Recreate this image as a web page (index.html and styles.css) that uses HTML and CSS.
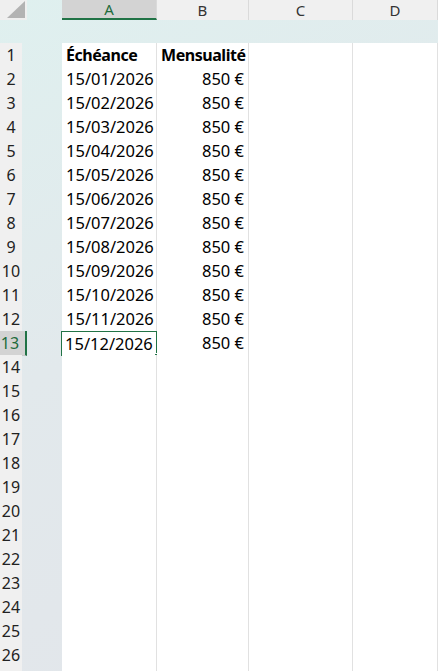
FILE: index.html
```html
<!DOCTYPE html>
<html lang="fr">
<head>
  <meta charset="UTF-8">
  <title>Échéancier</title>
  <link rel="stylesheet" href="styles.css">
</head>
<body>

  <div class="sheet">
    <!-- column headers -->
    <div class="row head">
      <div class="corner">
        <svg width="27" height="20" viewBox="0 0 27 20"><polygon points="7,18 25,18 25,1" fill="#b3b3b3"/></svg>
      </div>
      <div class="gap"></div>
      <div class="ch sel">A</div>
      <div class="ch">B</div>
      <div class="ch">C</div>
      <div class="ch">D</div>
    </div>
    <div class="band"></div>

    <div class="row"><div class="rh">1</div><div class="gap"></div><div class="c bold">Échéance</div><div class="c bold">Mensualité</div><div class="c"></div><div class="c"></div></div>
    <div class="row"><div class="rh">2</div><div class="gap"></div><div class="c">15/01/2026</div><div class="c num">850 €</div><div class="c"></div><div class="c"></div></div>
    <div class="row"><div class="rh">3</div><div class="gap"></div><div class="c">15/02/2026</div><div class="c num">850 €</div><div class="c"></div><div class="c"></div></div>
    <div class="row"><div class="rh">4</div><div class="gap"></div><div class="c">15/03/2026</div><div class="c num">850 €</div><div class="c"></div><div class="c"></div></div>
    <div class="row"><div class="rh">5</div><div class="gap"></div><div class="c">15/04/2026</div><div class="c num">850 €</div><div class="c"></div><div class="c"></div></div>
    <div class="row"><div class="rh">6</div><div class="gap"></div><div class="c">15/05/2026</div><div class="c num">850 €</div><div class="c"></div><div class="c"></div></div>
    <div class="row"><div class="rh">7</div><div class="gap"></div><div class="c">15/06/2026</div><div class="c num">850 €</div><div class="c"></div><div class="c"></div></div>
    <div class="row"><div class="rh">8</div><div class="gap"></div><div class="c">15/07/2026</div><div class="c num">850 €</div><div class="c"></div><div class="c"></div></div>
    <div class="row"><div class="rh">9</div><div class="gap"></div><div class="c">15/08/2026</div><div class="c num">850 €</div><div class="c"></div><div class="c"></div></div>
    <div class="row"><div class="rh">10</div><div class="gap"></div><div class="c">15/09/2026</div><div class="c num">850 €</div><div class="c"></div><div class="c"></div></div>
    <div class="row"><div class="rh">11</div><div class="gap"></div><div class="c">15/10/2026</div><div class="c num">850 €</div><div class="c"></div><div class="c"></div></div>
    <div class="row"><div class="rh">12</div><div class="gap"></div><div class="c">15/11/2026</div><div class="c num">850 €</div><div class="c"></div><div class="c"></div></div>
    <div class="row"><div class="rh sel">13</div><div class="gap"></div><div class="c active">15/12/2026<span class="handle"></span></div><div class="c num">850 €</div><div class="c"></div><div class="c"></div></div>
    <div class="row"><div class="rh">14</div><div class="gap"></div><div class="c"></div><div class="c"></div><div class="c"></div><div class="c"></div></div>
    <div class="row"><div class="rh">15</div><div class="gap"></div><div class="c"></div><div class="c"></div><div class="c"></div><div class="c"></div></div>
    <div class="row"><div class="rh">16</div><div class="gap"></div><div class="c"></div><div class="c"></div><div class="c"></div><div class="c"></div></div>
    <div class="row"><div class="rh">17</div><div class="gap"></div><div class="c"></div><div class="c"></div><div class="c"></div><div class="c"></div></div>
    <div class="row"><div class="rh">18</div><div class="gap"></div><div class="c"></div><div class="c"></div><div class="c"></div><div class="c"></div></div>
    <div class="row"><div class="rh">19</div><div class="gap"></div><div class="c"></div><div class="c"></div><div class="c"></div><div class="c"></div></div>
    <div class="row"><div class="rh">20</div><div class="gap"></div><div class="c"></div><div class="c"></div><div class="c"></div><div class="c"></div></div>
    <div class="row"><div class="rh">21</div><div class="gap"></div><div class="c"></div><div class="c"></div><div class="c"></div><div class="c"></div></div>
    <div class="row"><div class="rh">22</div><div class="gap"></div><div class="c"></div><div class="c"></div><div class="c"></div><div class="c"></div></div>
    <div class="row"><div class="rh">23</div><div class="gap"></div><div class="c"></div><div class="c"></div><div class="c"></div><div class="c"></div></div>
    <div class="row"><div class="rh">24</div><div class="gap"></div><div class="c"></div><div class="c"></div><div class="c"></div><div class="c"></div></div>
    <div class="row"><div class="rh">25</div><div class="gap"></div><div class="c"></div><div class="c"></div><div class="c"></div><div class="c"></div></div>
    <div class="row"><div class="rh">26</div><div class="gap"></div><div class="c"></div><div class="c"></div><div class="c"></div><div class="c"></div></div>
    <div class="row"><div class="rh"></div><div class="gap"></div><div class="c"></div><div class="c"></div><div class="c"></div><div class="c"></div></div>
  </div>

</body>
</html>
```

FILE: styles.css
```css
* { box-sizing: border-box; margin: 0; padding: 0; }
body {
  font-family: "Noto Sans", sans-serif;
  background: #fff;
  overflow: hidden;
}

/* whole sheet, the tinted bands show through */
.sheet {
  width: 438px;
  height: 671px;
  overflow: hidden;
  background: linear-gradient(155deg, #dff0ef 0%, #e2e9ec 45%, #e2e5ea 100%);
}

.row {
  display: grid;
  grid-template-columns: 27px 35px 95px 92px 104px 85px;
  height: 24px;
}
.row.head { height: 20px; }
.band { height: 23px; }

/* corner + column letters */
.corner {
  background: #efefef;
  height: 20px;
}
.corner svg { display: block; }
.ch {
  background: #f0f0f0;
  border-right: 1px solid #dadada;
  font-size: 15px;
  color: #333;
  text-align: center;
  line-height: 20px;
}
.ch.sel {
  background: #d3d3d3;
  color: #1e6b3c;
  border-bottom: 2px solid #217346;
  line-height: 18px;
}

/* row numbers */
.rh {
  background: #f0f0f0;
  border-bottom: 1px solid #c9c9c9;
  font-size: 16px;
  color: #222;
  width: 22px;
  text-align: center;
  line-height: 23px;
  padding-top: 1px;
}
.rh.sel {
  background: #d3d3d3;
  color: #1e6b3c;
  width: 27px;
  padding-right: 5px;
  border-right: 2px solid #217346;
}

/* cells */
.c {
  background: #fff;
  border-right: 1px solid #e1e1e1;
  border-bottom: 1px solid #e1e1e1;
  font-size: 16.5px;
  color: #000;
  padding: 1px 4px 0;
  line-height: 22px;
  white-space: nowrap;
  position: relative;
}
.c.bold {
  font-size: 16px;
  font-weight: bold;
  letter-spacing: -0.45px;
}
.c.num { text-align: right; }
.c.active {
  border: 1px solid #217346;
  line-height: 21px;
  padding-left: 3px;
  margin-left: -1px;
}
.handle {
  position: absolute;
  right: -3px;
  bottom: -3px;
  width: 5px;
  height: 5px;
  background: #217346;
  border: 1px solid #fff;
}
```
